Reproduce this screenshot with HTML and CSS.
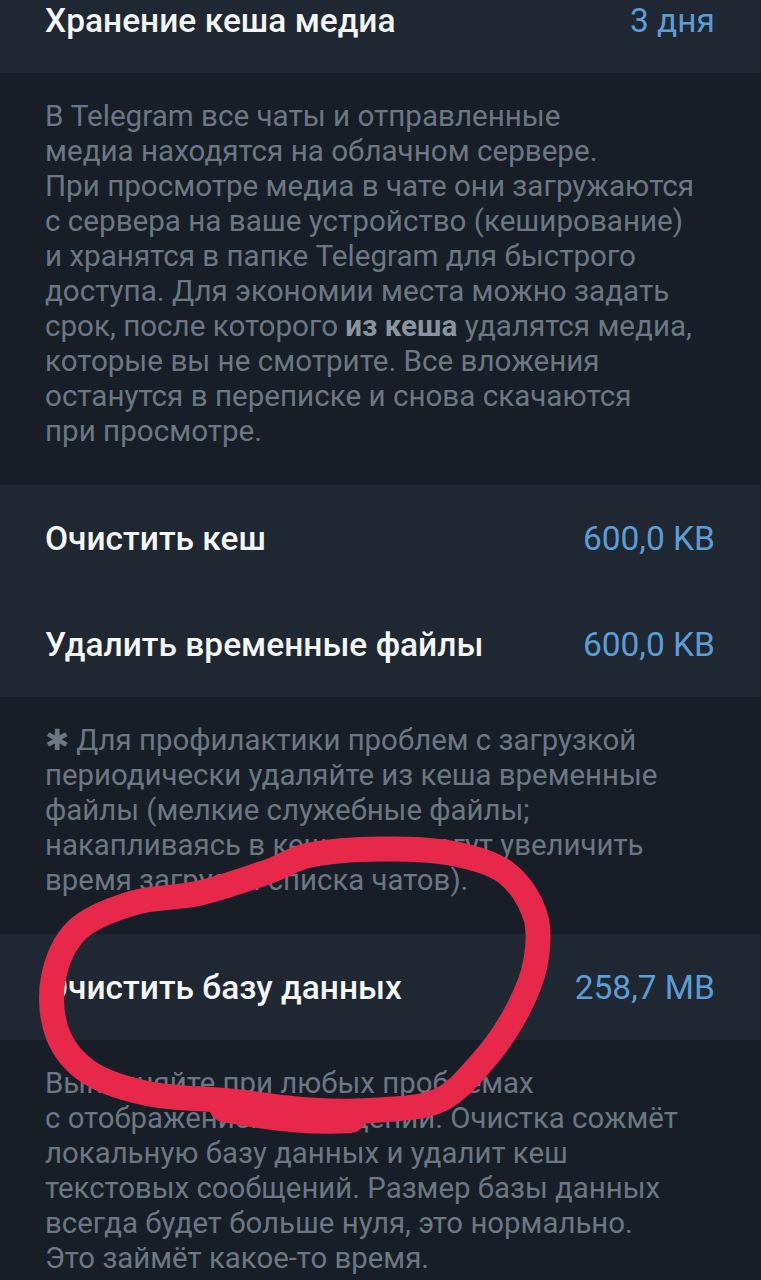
FILE: index.html
```html
<!DOCTYPE html>
<html lang="ru">
<head>
  <meta charset="UTF-8" />
  <meta name="viewport" content="width=device-width, initial-scale=1.0" />
  <title>Использование памяти</title>
  <link rel="stylesheet" href="styles.css">
</head>
<body>
  <div class="screen">
    <div class="group">
      <div class="row">
        <span class="title">Хранение кеша медиа</span>
        <span class="value">3 дня</span>
      </div>
    </div>
    <p class="note wide">
      В Telegram все чаты и отправленные<br>
      медиа находятся на облачном сервере.<br>
      При просмотре медиа в чате они загружаются<br>
      с сервера на ваше устройство (кеширование)<br>
      и хранятся в папке Telegram для быстрого<br>
      доступа. Для экономии места можно задать<br>
      срок, после которого <b>из кеша</b> удалятся медиа,<br>
      которые вы не смотрите. Все вложения<br>
      останутся в переписке и снова скачаются<br>
      при просмотре.
    </p>
    <div class="group">
      <div class="row">
        <span class="title">Очистить кеш</span>
        <span class="value">600,0 KB</span>
      </div>
      <div class="row">
        <span class="title">Удалить временные файлы</span>
        <span class="value">600,0 KB</span>
      </div>
    </div>
    <p class="note">
      ✱ Для профилактики проблем с загрузкой<br>
      периодически удаляйте из кеша временные<br>
      файлы (мелкие служебные файлы;<br>
      накапливаясь в кеше, они могут увеличить<br>
      время загрузки списка чатов).
    </p>
    <div class="group">
      <div class="row">
        <span class="title">Очистить базу данных</span>
        <span class="value">258,7 MB</span>
      </div>
    </div>
    <p class="note">
      Выполняйте при любых проблемах<br>
      с отображением сообщений. Очистка сожмёт<br>
      локальную базу данных и удалит кеш<br>
      текстовых сообщений. Размер базы данных<br>
      всегда будет больше нуля, это нормально.<br>
      Это займёт какое-то время.
    </p>
  </div>

  <!-- пометка от руки поверх скриншота -->
  <svg class="scribble" width="761" height="1280" viewBox="0 0 761 1280">
    <path d="M77 930 C 90.3 917.2, 112.5 909.2, 133 903 C 153.5 896.8, 177.7 898.2, 200 893
             C 222.3 887.8, 248.7 878.3, 267 872 C 285.3 865.7, 291.2 858.8, 310 855
             C 328.8 851.2, 356.7 849.3, 380 849 C 403.3 848.7, 429.2 849.2, 450 853
             C 470.8 856.8, 490.8 861.7, 505 872 C 519.2 882.3, 530 899.5, 535 915
             C 540 930.5, 538.3 948.3, 535 965 C 531.7 981.7, 523.8 998.8, 515 1015
             C 506.2 1031.2, 494.5 1047.8, 482 1062 C 469.5 1076.2, 457 1092, 440 1100
             C 423 1108, 401.7 1108.3, 380 1110 C 358.3 1111.7, 335 1111.5, 310 1110
             C 285 1108.5, 256.7 1103.7, 230 1101 C 203.3 1098.3, 173.3 1098.7, 150 1094
             C 126.7 1089.3, 105.3 1082.8, 90 1073 C 74.7 1063.2, 64.2 1050.5, 58 1035
             C 51.8 1019.5, 49.8 997.5, 53 980 C 56.2 962.5, 63.7 943, 77 930 Z"
          fill="none" stroke="#e8284a" stroke-width="25" stroke-linejoin="round"/>
    <path d="M225 1106 C 265 1114, 310 1120, 350 1117"
          fill="none" stroke="#e8284a" stroke-width="32" stroke-linecap="round"/>
  </svg>
</body>
</html>
```

FILE: styles.css
```css
body {
  margin: 0;
  background: #171e27;
  font-family: Roboto, 'Noto Sans', sans-serif;
  overflow: hidden;
}
.screen {
  margin-top: -33px;
}
.group {
  background: #1f2732;
}
.row {
  height: 106px;
  display: flex;
  align-items: center;
  justify-content: space-between;
  padding: 0 46px 0 45px;
}
.title {
  color: #f4f6f8;
  font-size: 33.5px;
  font-weight: 500;
}
.value {
  color: #5c9dd4;
  font-size: 33.5px;
}
.note {
  margin: 0;
  padding: 26px 30px 36px 45px;
  color: #6c7783;
  font-size: 29.4px;
  line-height: 35px;
}
.note.wide {
  font-size: 29.6px;
}
.note b {
  color: #8a949f;
  font-weight: 700;
}
.scribble {
  position: absolute;
  top: 0;
  left: 0;
  pointer-events: none;
}
```
